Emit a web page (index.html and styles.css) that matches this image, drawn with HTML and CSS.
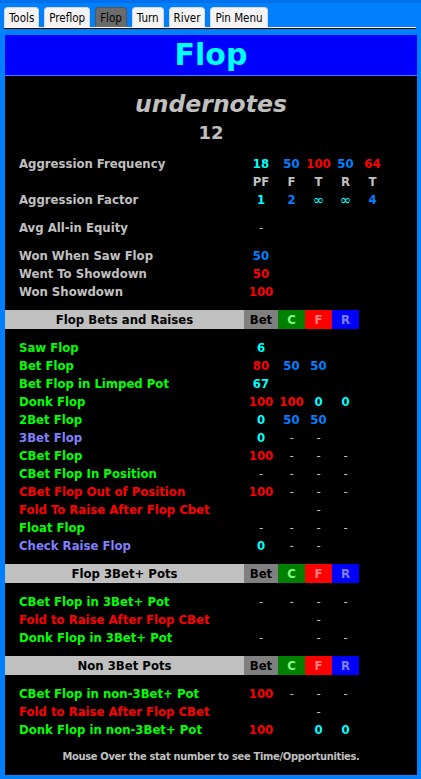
FILE: index.html
```html
<!DOCTYPE html>
<html lang="en">
<head>
  <meta charset="UTF-8">
  <title>Flop</title>
  <link rel="stylesheet" href="styles.css">
</head>
<body>

  <div class="tabs">
    <div class="tab">Tools</div>
    <div class="tab">Preflop</div>
    <div class="tab activa">Flop</div>
    <div class="tab">Turn</div>
    <div class="tab">River</div>
    <div class="tab">Pin Menu</div>
  </div>

  <div class="panel">
    <div class="titulo">Flop</div>

    <div class="cuerpo">
      <div class="jugador">undernotes</div>
      <div class="manos">12</div>

      <div class="grupo">
        <div class="fila"><span class="lbl">Aggression Frequency</span><span class="cyan">18</span><span class="azul">50</span><span class="rojo">100</span><span class="azul">50</span><span class="rojo">64</span></div>
        <div class="fila"><span class="lbl"></span><span>PF</span><span>F</span><span>T</span><span>R</span><span>T</span></div>
        <div class="fila"><span class="lbl">Aggression Factor</span><span class="cyan">1</span><span class="azul">2</span><span class="cyan inf">∞</span><span class="cyan inf">∞</span><span class="azul">4</span></div>
      </div>

      <div class="grupo">
        <div class="fila"><span class="lbl">Avg All-in Equity</span><span class="guion">-</span></div>
      </div>

      <div class="grupo">
        <div class="fila"><span class="lbl">Won When Saw Flop</span><span class="azul">50</span></div>
        <div class="fila"><span class="lbl">Went To Showdown</span><span class="rojo">50</span></div>
        <div class="fila"><span class="lbl">Won Showdown</span><span class="rojo">100</span></div>
      </div>

      <div class="barra">
        <span class="nombre">Flop Bets and Raises</span><span class="bet">Bet</span><span class="c">C</span><span class="f">F</span><span class="r">R</span>
      </div>

      <div class="grupo">
        <div class="fila"><span class="lbl verde">Saw Flop</span><span class="cyan">6</span></div>
        <div class="fila"><span class="lbl verde">Bet Flop</span><span class="rojo">80</span><span class="azul">50</span><span class="azul">50</span></div>
        <div class="fila"><span class="lbl verde">Bet Flop in Limped Pot</span><span class="cyan">67</span></div>
        <div class="fila"><span class="lbl verde">Donk Flop</span><span class="rojo">100</span><span class="rojo">100</span><span class="cyan">0</span><span class="cyan">0</span></div>
        <div class="fila"><span class="lbl verde">2Bet Flop</span><span class="cyan">0</span><span class="azul">50</span><span class="azul">50</span></div>
        <div class="fila"><span class="lbl lila">3Bet Flop</span><span class="cyan">0</span><span class="guion">-</span><span class="guion">-</span></div>
        <div class="fila"><span class="lbl verde">CBet Flop</span><span class="rojo">100</span><span class="guion">-</span><span class="guion">-</span><span class="guion">-</span></div>
        <div class="fila"><span class="lbl verde">CBet Flop In Position</span><span class="guion">-</span><span class="guion">-</span><span class="guion">-</span><span class="guion">-</span></div>
        <div class="fila"><span class="lbl rojo">CBet Flop Out of Position</span><span class="rojo">100</span><span class="guion">-</span><span class="guion">-</span><span class="guion">-</span></div>
        <div class="fila"><span class="lbl rojo">Fold To Raise After Flop Cbet</span><span></span><span></span><span class="guion">-</span></div>
        <div class="fila"><span class="lbl verde">Float Flop</span><span class="guion">-</span><span class="guion">-</span><span class="guion">-</span><span class="guion">-</span></div>
        <div class="fila"><span class="lbl lila">Check Raise Flop</span><span class="cyan">0</span><span class="guion">-</span><span class="guion">-</span></div>
      </div>

      <div class="barra">
        <span class="nombre">Flop 3Bet+ Pots</span><span class="bet">Bet</span><span class="c">C</span><span class="f">F</span><span class="r">R</span>
      </div>

      <div class="grupo">
        <div class="fila"><span class="lbl verde">CBet Flop in 3Bet+ Pot</span><span class="guion">-</span><span class="guion">-</span><span class="guion">-</span><span class="guion">-</span></div>
        <div class="fila"><span class="lbl rojo">Fold to Raise After Flop CBet</span><span></span><span></span><span class="guion">-</span></div>
        <div class="fila"><span class="lbl verde">Donk Flop in 3Bet+ Pot</span><span class="guion">-</span><span></span><span class="guion">-</span><span class="guion">-</span></div>
      </div>

      <div class="barra">
        <span class="nombre">Non 3Bet Pots</span><span class="bet">Bet</span><span class="c">C</span><span class="f">F</span><span class="r">R</span>
      </div>

      <div class="grupo">
        <div class="fila"><span class="lbl verde">CBet Flop in non-3Bet+ Pot</span><span class="rojo">100</span><span class="guion">-</span><span class="guion">-</span><span class="guion">-</span></div>
        <div class="fila"><span class="lbl rojo">Fold to Raise After Flop CBet</span><span></span><span></span><span class="guion">-</span></div>
        <div class="fila"><span class="lbl verde">Donk Flop in non-3Bet+ Pot</span><span class="rojo">100</span><span></span><span class="cyan">0</span><span class="cyan">0</span></div>
      </div>

      <div class="pie">Mouse Over the stat number to see Time/Opportunities.</div>
    </div>
  </div>

</body>
</html>
```

FILE: styles.css
```css
* {
  box-sizing: border-box;
}

body {
  margin: 0;
  background: #0080ff;
  border-top: 3px solid #0070ec;
  font-family: 'DejaVu Sans Condensed', 'DejaVu Sans', sans-serif;
  height: 779px;
  overflow: hidden;
}

/* pestañas */
.tabs {
  display: flex;
  gap: 5px;
  margin: 4px 5px 0 4px;
  border-bottom: 1px solid #000;
  box-shadow: 0 -1px 0 #fff inset;
  height: 22px;
}

.tab {
  height: 20px;
  line-height: 20px;
  padding: 0 4px;
  font-size: 11.5px;
  color: #000;
  background: #f4f4f4;
  border: 1px solid #d8d8d8;
  border-bottom: none;
  border-radius: 4px 4px 0 0;
}

.tab.activa {
  background: #6b6b6b;
  border-color: #555;
}

/* panel principal */
.panel {
  margin: 6px 4px 0 5px;
  background: #000;
}

.titulo {
  background: #0000ff;
  color: #00ffff;
  font-family: 'DejaVu Sans', sans-serif;
  font-weight: bold;
  font-size: 30px;
  text-align: center;
  height: 41px;
  line-height: 40px;
  border-bottom: 1px solid #3a7cff;
}

.cuerpo {
  padding: 13px 0 10px;
  color: #c0c0c0;
  font-size: 13px;
  font-weight: bold;
}

.jugador {
  font-family: 'DejaVu Sans', sans-serif;
  font-style: italic;
  font-size: 23.5px;
  line-height: 30px;
  text-align: center;
}

.manos {
  font-family: 'DejaVu Sans', sans-serif;
  font-size: 18px;
  line-height: 22px;
  margin-top: 3px;
  text-align: center;
}

.grupo {
  margin-top: 10px;
}

.fila {
  display: grid;
  grid-template-columns: 225px 34px 27px 27px 27px 27px;
  padding-left: 14px;
  height: 18px;
  line-height: 20px;
  text-align: center;
  white-space: nowrap;
}

.fila .lbl {
  text-align: left;
}

.inf {
  font-size: 15px;
  font-weight: normal;
}

.guion {
  font-weight: normal;
}

.cyan { color: #00ffff; }
.azul { color: #0080ff; }
.rojo { color: #ff0000; }
.verde { color: #00ff00; }
.lila { color: #8080ff; }

/* barra de sección */
.barra {
  display: grid;
  grid-template-columns: 239px 34px 27px 27px 27px;
  height: 18px;
  line-height: 19px;
  margin-top: 10px;
  text-align: center;
  color: #000;
}

.barra .nombre { background: #c0c0c0; }
.barra .bet { background: #808080; }
.barra .c { background: #008000; color: #80ff80; }
.barra .f { background: #ff0000; color: #ff8080; }
.barra .r { background: #0000ff; color: #8080ff; }

.pie {
  margin-top: 11px;
  text-align: center;
  font-size: 11px;
  line-height: 16px;
  letter-spacing: -0.3px;
}
```
